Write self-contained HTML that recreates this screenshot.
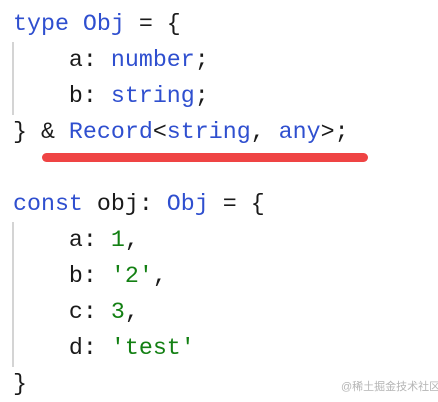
<!DOCTYPE html>
<html><head><style>
body{margin:0;width:438px;height:402px;background:#fff;overflow:hidden;position:relative}
pre{position:absolute;left:13px;top:6px;margin:0;font-family:"Liberation Mono",monospace;font-size:23.3px;line-height:36px;color:#1a1a1a}
.k{color:#2f4fcf}.n{color:#138013}
.bar{position:absolute;left:12px;width:2px;background:#d4d4d4}
.red{position:absolute;left:42px;top:153px;width:326px;height:9px;border-radius:5px;background:#ef4444}
.wm{position:absolute;left:341px;top:378px;white-space:nowrap;font-family:"Liberation Sans","Noto Sans CJK SC",sans-serif;font-size:11px;color:#b5b5b5}
</style></head><body>
<div class="bar" style="top:42px;height:73px"></div>
<div class="bar" style="top:222px;height:145px"></div>
<pre><span class="k">type</span> <span class="k">Obj</span> = {
    a: <span class="k">number</span>;
    b: <span class="k">string</span>;
} &amp; <span class="k">Record</span>&lt;<span class="k">string</span>, <span class="k">any</span>&gt;;

<span class="k">const</span> obj: <span class="k">Obj</span> = {
    a: <span class="n">1</span>,
    b: <span class="n">'2'</span>,
    c: <span class="n">3</span>,
    d: <span class="n">'test'</span>
}</pre>
<div class="red"></div>
<div class="wm">@稀土掘金技术社区</div>
</body></html>
